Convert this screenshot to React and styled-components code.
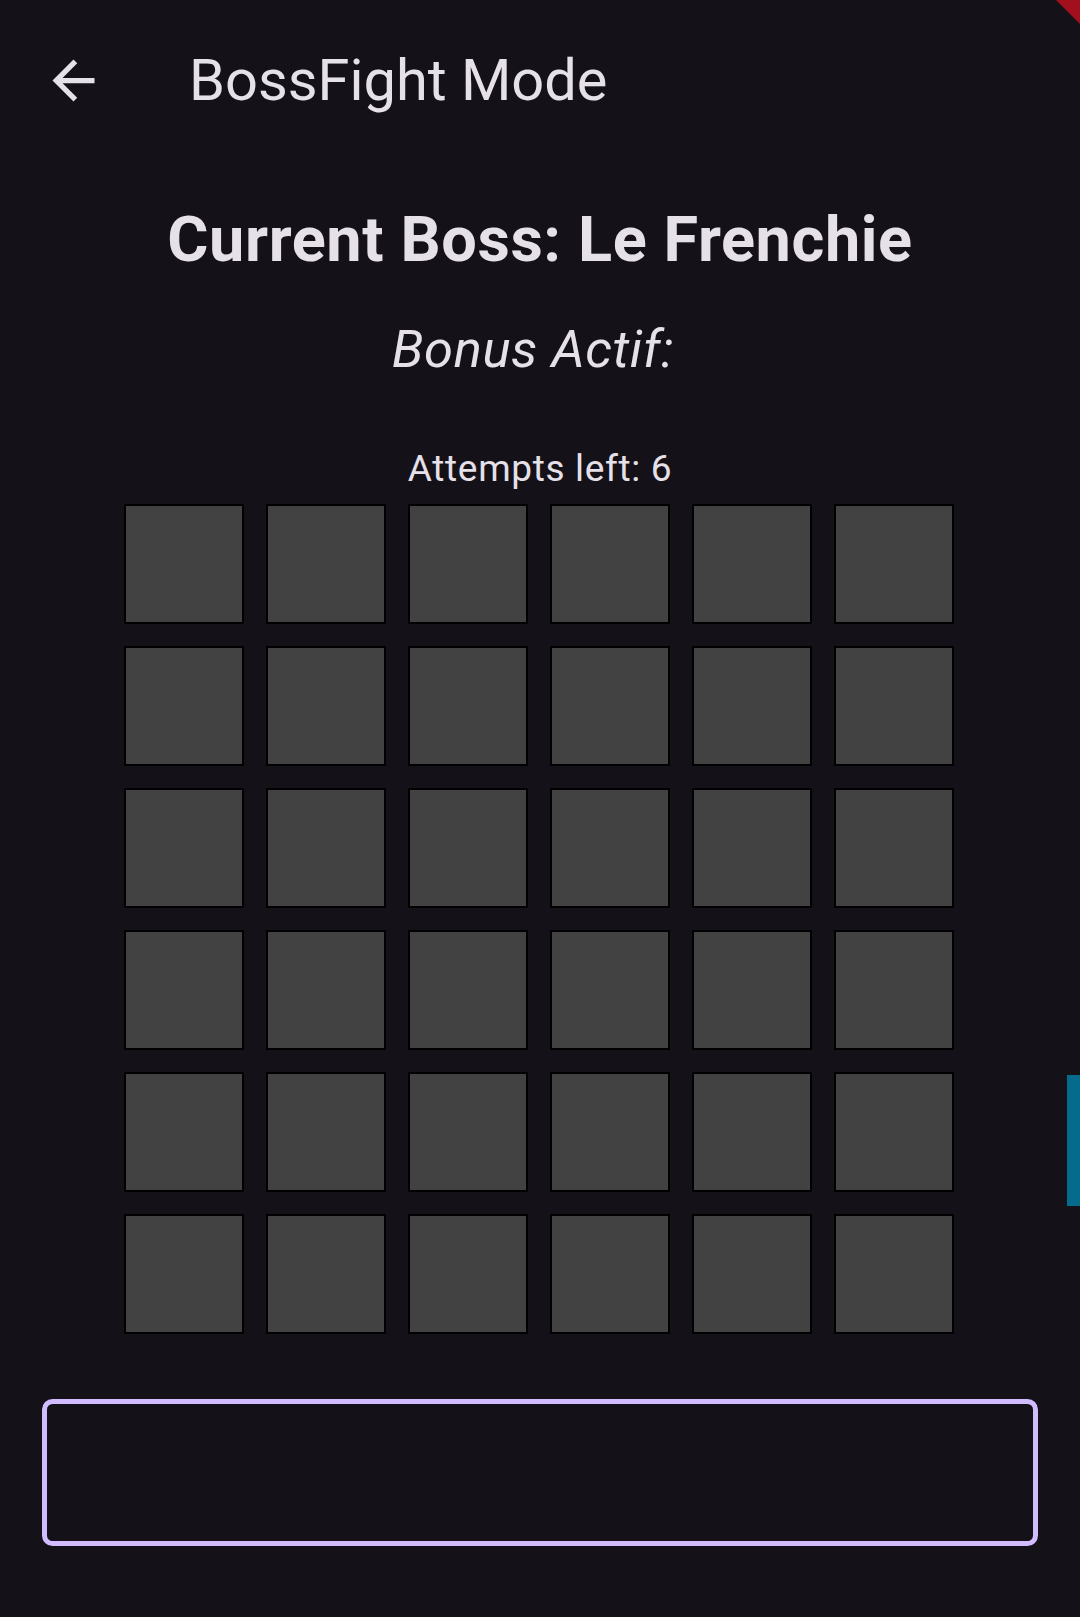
import React from 'react';
import styled, { createGlobalStyle } from 'styled-components';

const GlobalStyle = createGlobalStyle`
  html, body {
    margin: 0;
    padding: 0;
    background-color: #141218;
  }

  body {
    font-family: Roboto, 'Noto Sans', 'Liberation Sans', sans-serif;
    color: #e6e0e9;
  }
`;

const ROWS = 6;
const COLS = 6;

const ArrowBack = () => (
  <svg width="63" height="63" viewBox="0 0 24 24" fill="currentColor">
    <path d="M20 11H7.83l5.59-5.59L12 4l-8 8 8 8 1.41-1.41L7.83 13H20v-2z" />
  </svg>
);

const App = () => {
  const cells = Array.from({ length: ROWS * COLS }, (_, i) => i);

  return (
    <Page>
      <GlobalStyle />
      <AppBar>
        <BackButton aria-label="Back">
          <ArrowBack />
        </BackButton>
        <Title>BossFight Mode</Title>
      </AppBar>

      <Body>
        <BossName>Current Boss: Le Frenchie</BossName>
        <Bonus>Bonus Actif:</Bonus>
        <Attempts>Attempts left: 6</Attempts>

        <Board>
          {cells.map(i => (
            <Tile key={i} />
          ))}
        </Board>

        <GuessInput />
      </Body>

      <DebugCorner />
      <ScrollThumb />
    </Page>
  );
};

export default App;

const Page = styled.div`
  position: relative;
  min-height: 1617px;
  overflow: hidden;
  background-color: #141218;
`;

const AppBar = styled.header`
  display: flex;
  align-items: center;
  height: 161px;
  padding-left: 42px;
`;

const BackButton = styled.button`
  display: flex;
  align-items: center;
  justify-content: center;
  width: 63px;
  height: 63px;
  padding: 0;
  border: none;
  background: transparent;
  color: #e6e0e9;
`;

const Title = styled.h1`
  margin: 0 0 0 84px;
  font-size: 57.75px;
  font-weight: 400;
  line-height: 1;
  color: #e6e0e9;
`;

const Body = styled.main`
  display: flex;
  flex-direction: column;
  align-items: center;
`;

const BossName = styled.h2`
  margin: 47.4px 0 0;
  font-size: 63px;
  font-weight: 700;
  line-height: 1;
  letter-spacing: 0.6px;
  color: #e6e0e9;
`;

const Bonus = styled.p`
  margin: 51.7px 14px 0 0;
  font-size: 52.5px;
  font-style: italic;
  line-height: 1;
  letter-spacing: 0.6px;
  color: #e6e0e9;
`;

const Attempts = styled.p`
  margin: 74px 0 0;
  font-size: 37px;
  line-height: 1;
  letter-spacing: 0.66px;
  color: #e6e0e9;
`;

const Board = styled.div`
  display: grid;
  grid-template-columns: repeat(6, 120px);
  grid-auto-rows: 120px;
  gap: 22px;
  margin-top: 17.4px;
  margin-right: 2px;
`;

const Tile = styled.div`
  box-sizing: border-box;
  border: 2px solid #000000;
  background-color: #424242;
`;

const GuessInput = styled.input`
  box-sizing: border-box;
  width: 996px;
  height: 147px;
  margin-top: 65px;
  border: 5px solid #d0bcff;
  border-radius: 10.5px;
  background: transparent;
  outline: none;
  color: #e6e0e9;
  font-family: inherit;
  font-size: 42px;
`;

const DebugCorner = styled.div`
  position: absolute;
  top: 0;
  right: 0;
  width: 24px;
  height: 24px;
  background-color: #a3101d;
  clip-path: polygon(0 0, 100% 0, 100% 100%);
`;

const ScrollThumb = styled.div`
  position: absolute;
  top: 1075px;
  right: 0;
  width: 13px;
  height: 131px;
  background-color: #046b8c;
`;
